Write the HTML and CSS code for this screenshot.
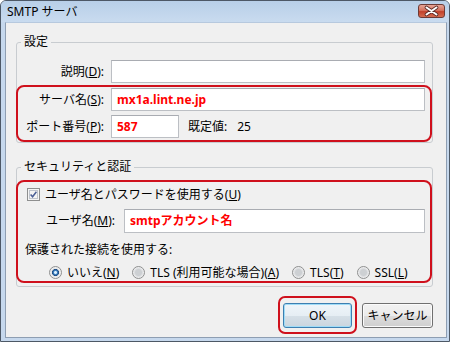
FILE: index.html
```html
<!DOCTYPE html>
<html lang="ja">

<head>
    <meta charset="UTF-8">
    <meta name="viewport" content="width=device-width, initial-scale=1.0">
    <title>SMTP サーバ</title>
    <link rel="stylesheet" href="styles.css">
</head>

<body>
    <div class="window">
        <div class="titlebar">
            <span class="title">SMTP サーバ</span>
            <span class="close">
                <svg width="25" height="12" viewBox="0 0 25 12">
                    <path d="M7.5 2.5 L17.5 9.5 M17.5 2.5 L7.5 9.5" stroke="#5a2a26" stroke-width="3.6" fill="none" stroke-linecap="round"/>
                    <path d="M7.5 2.5 L17.5 9.5 M17.5 2.5 L7.5 9.5" stroke="#fff" stroke-width="2" fill="none" stroke-linecap="round"/>
                </svg>
            </span>
        </div>
        <div class="client">
            <fieldset class="group group-first">
                <legend>設定</legend>
                <div class="row desc-row">
                    <label class="lbl">説明(<u>D</u>):</label>
                    <span class="field wide"></span>
                </div>
                <div class="mark mark-server">
                    <div class="row">
                        <label class="lbl">サーバ名(<u>S</u>):</label>
                        <span class="field wide value">mx1a.lint.ne.jp</span>
                    </div>
                    <div class="row port-row">
                        <label class="lbl">ポート番号(<u>P</u>):</label>
                        <span class="field short value">587</span>
                        <span class="default">既定値:</span>
                        <span class="default-num">25</span>
                    </div>
                </div>
            </fieldset>

            <fieldset class="group group-second">
                <legend>セキュリティと認証</legend>
                <div class="mark mark-auth">
                    <div class="check-row">
                        <span class="checkbox">
                            <svg width="7" height="7" viewBox="0 0 7 7">
                                <path d="M0.6 3.4 L2.6 5.8 L6.4 0.8" fill="none" stroke="#4b5f96" stroke-width="1.5"/>
                            </svg>
                        </span>
                        <span>ユーザ名とパスワードを使用する(<u>U</u>)</span>
                    </div>
                    <div class="row user-row">
                        <label class="lbl user-lbl">ユーザ名(<u>M</u>):</label>
                        <span class="field user-field value">smtpアカウント名</span>
                    </div>
                    <div class="note">保護された接続を使用する:</div>
                    <div class="radios">
                        <span class="radio-item"><span class="radio on"></span><span>いいえ(<u>N</u>)</span></span>
                        <span class="radio-item"><span class="radio"></span><span>TLS (利用可能な場合)(<u>A</u>)</span></span>
                        <span class="radio-item"><span class="radio"></span><span>TLS(<u>T</u>)</span></span>
                        <span class="radio-item"><span class="radio"></span><span>SSL(<u>L</u>)</span></span>
                    </div>
                </div>
            </fieldset>

            <div class="buttons">
                <span class="ok-mark"><button class="btn btn-default">OK</button></span>
                <button class="btn btn-cancel">キャンセル</button>
            </div>
        </div>
    </div>
</body>

</html>
```

FILE: styles.css
```css
* {
    margin: 0;
    padding: 0;
    box-sizing: border-box;
}

body {
    font: 12px/16px "Noto Sans", "Noto Sans CJK JP", sans-serif;
    color: #000;
    background: #fff;
}

u {
    text-decoration: underline;
    text-underline-offset: 1px;
}

/* window frame */
.window {
    width: 450px;
    height: 342px;
    border: 1px solid #4d5866;
    border-radius: 6px 6px 0 0;
    background: #c6d8ed;
    display: flex;
    flex-direction: column;
}

.titlebar {
    height: 21px;
    display: flex;
    justify-content: space-between;
    align-items: flex-start;
    padding: 3px 4px 0 6px;
    background: linear-gradient(#b8cfe8, #c9dbef);
    border-radius: 5px 5px 0 0;
}

.close {
    width: 27px;
    height: 14px;
    display: flex;
    align-items: center;
    justify-content: center;
    border: 1px solid #6e3a35;
    border-radius: 3px;
    background: linear-gradient(#e6a597 0%, #d5735f 45%, #c2412b 55%, #d46c50 100%);
}

.client {
    flex: 1;
    margin: 0 2px 3px 4px;
    background: #f0f0f0;
    border: 1px solid #8e9eb2;
    border-top-color: #b7c9de;
    display: flex;
    flex-direction: column;
}

/* group boxes */
.group {
    margin: 11px 13px 0 10px;
    border: 1px solid #c8ccd0;
    border-radius: 3px;
    padding: 0;
    min-width: 0;
}

.group-second {
    margin-top: 16px;
}

.group legend {
    margin-left: 4px;
    padding: 0 3px;
    line-height: 16px;
}

.mark {
    border: 2px solid #cf101c;
    border-radius: 8px;
    margin-left: -1px;
}

.mark-server {
    padding: 1px 0 2px;
}

.mark-auth {
    margin-top: 5px;
    margin-bottom: 3px;
    padding-bottom: 2px;
}

/* label + textbox rows */
.row {
    display: flex;
    align-items: center;
    height: 23px;
}

.desc-row {
    margin: 10px 0 2px 1px;
}

.port-row {
    margin-top: 4px;
}

.lbl {
    width: 86px;
    margin-right: 7px;
    text-align: right;
    white-space: nowrap;
}

.field {
    height: 23px;
    background: #fff;
    border: 1px solid #bcbfc4;
    border-top-color: #a9acb2;
    padding: 0 5px;
    line-height: 21px;
}

.wide {
    width: 314px;
}

.short {
    width: 68px;
}

.value {
    color: #f00;
    font-size: 12px;
    font-weight: bold;
}

.default {
    margin-left: 9px;
}

.default-num {
    margin-left: 10px;
}

.check-row {
    display: flex;
    align-items: center;
    height: 13px;
    margin-top: 6px;
    padding-left: 9px;
    gap: 5px;
}

.checkbox {
    width: 13px;
    height: 13px;
    border: 1px solid #8e8f8f;
    background: #f4f4f4;
    display: flex;
    align-items: center;
    justify-content: center;
    box-shadow: inset 0 0 0 1px #f4f4f4, inset 0 0 0 2px #bfc4cc;
}

.user-row {
    height: 24px;
    margin-top: 8px;
}

.user-lbl {
    width: 97px;
    margin-right: 9px;
}

.user-field {
    width: 301px;
    height: 24px;
    line-height: 22px;
}

.note {
    margin-top: 9px;
    padding-left: 7px;
}

.radios {
    display: flex;
    align-items: center;
    height: 13px;
    margin-top: 8px;
    padding-left: 31px;
    gap: 13px;
}

.radio-item {
    display: flex;
    align-items: center;
    gap: 5px;
    white-space: nowrap;
}

.radio {
    width: 13px;
    height: 13px;
    border-radius: 50%;
    border: 1px solid #8e8f8f;
    background: radial-gradient(circle, #cdd0d3 0 3px, #e4e5e7 4.5px, #f7f7f7 6px);
}

.radio.on {
    background: radial-gradient(circle, #d8eefc 0 1px, #3b7fc0 2px, #1d4b82 3.2px, #e4e5e7 3.8px, #f7f7f7 6px);
}

/* dialog buttons */
.buttons {
    display: flex;
    justify-content: flex-end;
    align-items: flex-start;
    gap: 5px;
    margin-top: 9px;
    padding-right: 13px;
}

.ok-mark {
    border: 2px solid #cf101c;
    border-radius: 7px;
    padding: 5px 3px 4px;
}

.btn {
    display: block;
    width: 69px;
    height: 25px;
    border: 1px solid #707070;
    border-radius: 3px;
    background: linear-gradient(#f2f2f2 0%, #ebebeb 50%, #dddddd 50%, #cfcfcf 100%);
    box-shadow: inset 0 0 0 1px #fbfbfb;
    font: inherit;
    line-height: 23px;
    color: #000;
}

.btn-default {
    border-color: #3c7fb1;
    box-shadow: inset 0 0 0 1px #9fdcf7;
    background: linear-gradient(#eef5fa 0%, #e6eef4 50%, #d6e0e8 50%, #cad5de 100%);
}

.btn-cancel {
    width: 71px;
    margin-top: 7px;
}
```
